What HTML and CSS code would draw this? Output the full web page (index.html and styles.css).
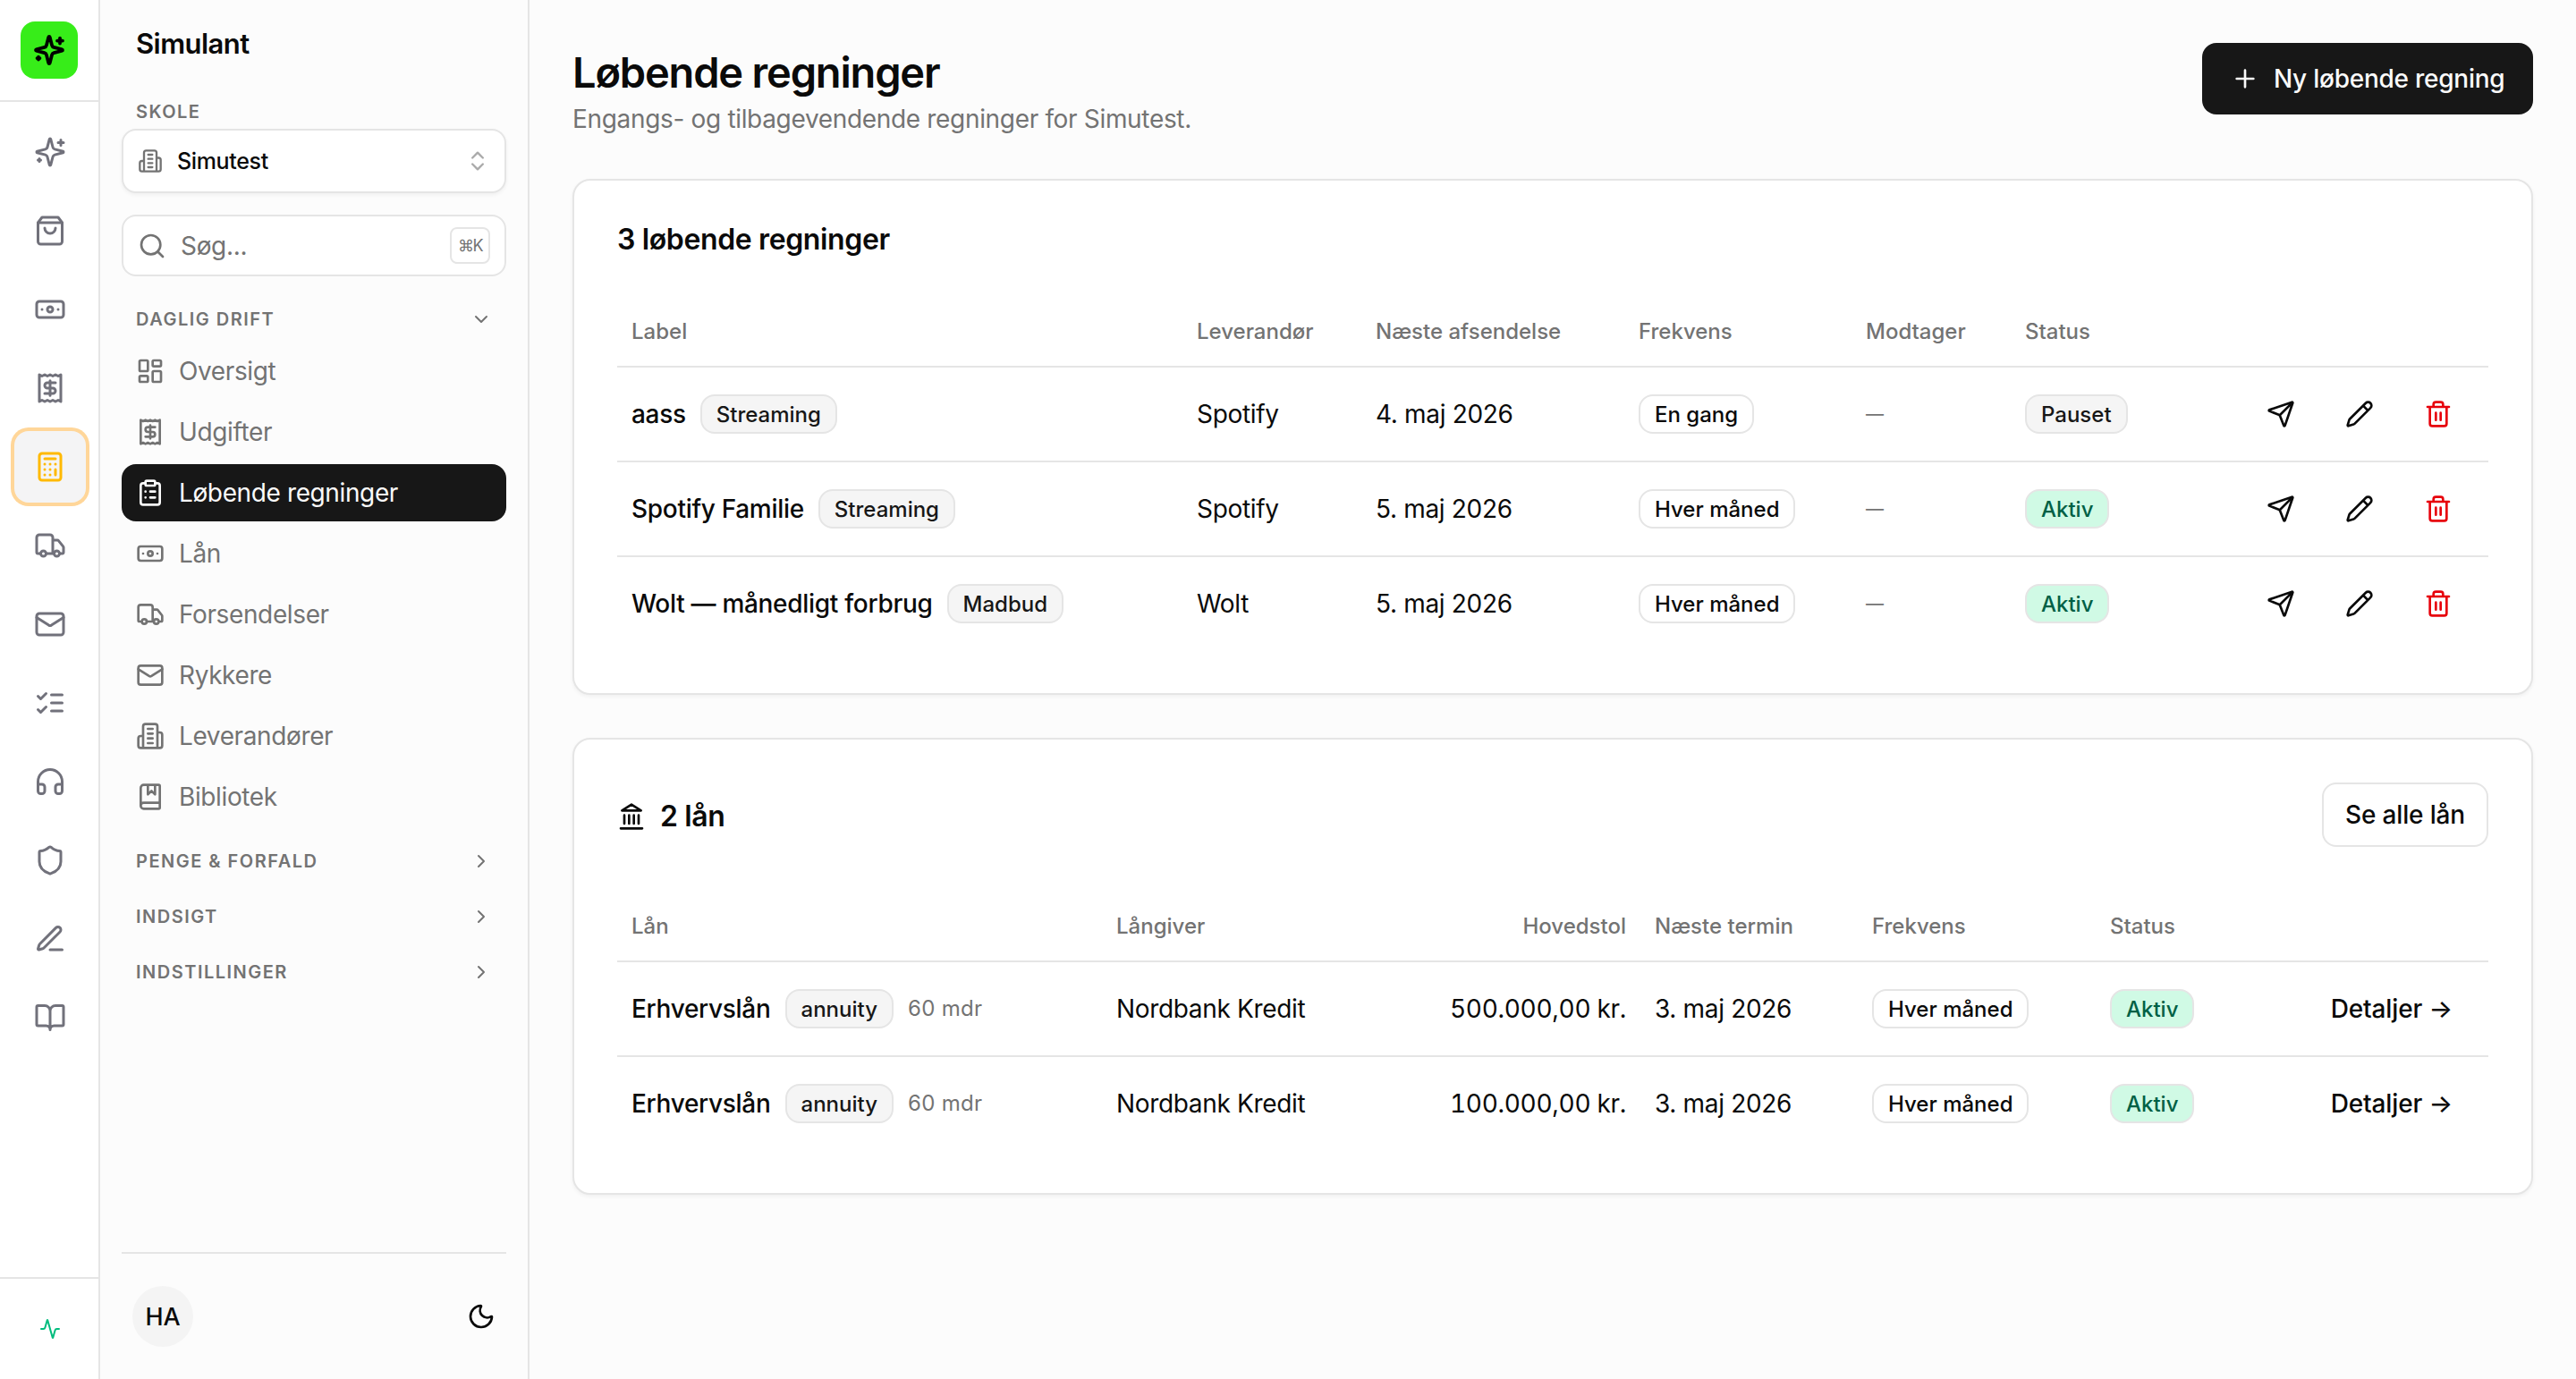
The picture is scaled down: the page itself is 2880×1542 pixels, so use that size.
FILE: index.html
```
<!DOCTYPE html>
<html lang="da">
<head>
    <meta charset="UTF-8">
    <meta name="viewport" content="width=device-width, initial-scale=1.0">
    <title>Løbende regninger</title>
    <link rel="stylesheet" href="styles.css">
</head>
<body>
    <!-- Icon sprite -->
    <svg class="sprite" xmlns="http://www.w3.org/2000/svg">
        <symbol id="sparkles" viewBox="0 0 24 24"><path d="M9.937 15.5A2 2 0 0 0 8.5 14.063l-6.135-1.582a.5.5 0 0 1 0-.962L8.5 9.936A2 2 0 0 0 9.937 8.5l1.582-6.135a.5.5 0 0 1 .963 0L14.063 8.5A2 2 0 0 0 15.5 9.937l6.135 1.581a.5.5 0 0 1 0 .964L15.5 14.063a2 2 0 0 0-1.437 1.437l-1.582 6.135a.5.5 0 0 1-.963 0z"/><path d="M20 3v4M22 5h-4M4 17v2M5 18H3"/></symbol>
        <symbol id="bag" viewBox="0 0 24 24"><path d="M6 2 3 6v14a2 2 0 0 0 2 2h14a2 2 0 0 0 2-2V6l-3-4Z"/><path d="M3 6h18M16 10a4 4 0 0 1-8 0"/></symbol>
        <symbol id="banknote" viewBox="0 0 24 24"><rect x="2" y="6" width="20" height="12" rx="2"/><circle cx="12" cy="12" r="2"/><path d="M6 12h.01M18 12h.01"/></symbol>
        <symbol id="receipt" viewBox="0 0 24 24"><path d="M4 2v20l2-1 2 1 2-1 2 1 2-1 2 1 2-1 2 1V2l-2 1-2-1-2 1-2-1-2 1-2-1-2 1Z"/><path d="M16 8h-6a2 2 0 1 0 0 4h4a2 2 0 1 1 0 4H8M12 17.5v-11"/></symbol>
        <symbol id="calculator" viewBox="0 0 24 24"><rect x="4" y="2" width="16" height="20" rx="2"/><path d="M8 6h8M16 14v4M16 10h.01M12 10h.01M8 10h.01M12 14h.01M8 14h.01M12 18h.01M8 18h.01"/></symbol>
        <symbol id="truck" viewBox="0 0 24 24"><path d="M14 18V6a2 2 0 0 0-2-2H4a2 2 0 0 0-2 2v11a1 1 0 0 0 1 1h2M15 18H9M19 18h2a1 1 0 0 0 1-1v-3.65a1 1 0 0 0-.22-.624l-3.48-4.35A1 1 0 0 0 17.52 8H14"/><circle cx="17" cy="18" r="2"/><circle cx="7" cy="18" r="2"/></symbol>
        <symbol id="mail" viewBox="0 0 24 24"><rect x="2" y="4" width="20" height="16" rx="2"/><path d="m22 7-8.991 5.727a2 2 0 0 1-2.009 0L2 7"/></symbol>
        <symbol id="list-checks" viewBox="0 0 24 24"><path d="m3 17 2 2 4-4M3 7l2 2 4-4M13 6h8M13 12h8M13 18h8"/></symbol>
        <symbol id="headphones" viewBox="0 0 24 24"><path d="M3 14h3a2 2 0 0 1 2 2v3a2 2 0 0 1-2 2H5a2 2 0 0 1-2-2v-7a9 9 0 0 1 18 0v7a2 2 0 0 1-2 2h-1a2 2 0 0 1-2-2v-3a2 2 0 0 1 2-2h3"/></symbol>
        <symbol id="shield" viewBox="0 0 24 24"><path d="M20 13c0 5-3.5 7.5-7.66 8.95a1 1 0 0 1-.67-.01C7.5 20.5 4 18 4 13V6a1 1 0 0 1 1-1c2 0 4.5-1.2 6.24-2.72a1.17 1.17 0 0 1 1.52 0C14.51 3.81 17 5 19 5a1 1 0 0 1 1 1z"/></symbol>
        <symbol id="pen-line" viewBox="0 0 24 24"><path d="M12 20h9M16.376 3.622a1 1 0 0 1 3.002 3.002L7.368 18.635a2 2 0 0 1-.855.506l-2.872.838a.5.5 0 0 1-.62-.62l.838-2.872a2 2 0 0 1 .506-.854z"/></symbol>
        <symbol id="book-open" viewBox="0 0 24 24"><path d="M12 7v14M3 18a1 1 0 0 1-1-1V4a1 1 0 0 1 1-1h5a4 4 0 0 1 4 4 4 4 0 0 1 4-4h5a1 1 0 0 1 1 1v13a1 1 0 0 1-1 1h-6a3 3 0 0 0-3 3 3 3 0 0 0-3-3z"/></symbol>
        <symbol id="activity" viewBox="0 0 24 24"><path d="M22 12h-2.48a2 2 0 0 0-1.93 1.46l-2.35 8.36a.25.25 0 0 1-.48 0L9.24 2.18a.25.25 0 0 0-.48 0l-2.35 8.36A2 2 0 0 1 4.49 12H2"/></symbol>
        <symbol id="building" viewBox="0 0 24 24"><path d="M6 22V4a2 2 0 0 1 2-2h8a2 2 0 0 1 2 2v18ZM6 12H4a2 2 0 0 0-2 2v6a2 2 0 0 0 2 2h2M18 9h2a2 2 0 0 1 2 2v9a2 2 0 0 1-2 2h-2M10 6h4M10 10h4M10 14h4M10 18h4"/></symbol>
        <symbol id="chevrons" viewBox="0 0 24 24"><path d="m7 15 5 5 5-5M7 9l5-5 5 5"/></symbol>
        <symbol id="chevron-down" viewBox="0 0 24 24"><path d="m6 9 6 6 6-6"/></symbol>
        <symbol id="chevron-right" viewBox="0 0 24 24"><path d="m9 18 6-6-6-6"/></symbol>
        <symbol id="search" viewBox="0 0 24 24"><path d="m21 21-4.34-4.34"/><circle cx="11" cy="11" r="8"/></symbol>
        <symbol id="dashboard" viewBox="0 0 24 24"><rect x="3" y="3" width="7" height="9" rx="1"/><rect x="14" y="3" width="7" height="5" rx="1"/><rect x="14" y="12" width="7" height="9" rx="1"/><rect x="3" y="16" width="7" height="5" rx="1"/></symbol>
        <symbol id="clipboard" viewBox="0 0 24 24"><rect x="8" y="2" width="8" height="4" rx="1"/><path d="M16 4h2a2 2 0 0 1 2 2v14a2 2 0 0 1-2 2H6a2 2 0 0 1-2-2V6a2 2 0 0 1 2-2h2M12 11h4M12 16h4M8 11h.01M8 16h.01"/></symbol>
        <symbol id="book-marked" viewBox="0 0 24 24"><path d="M10 2v8l3-3 3 3V2M4 19.5v-15A2.5 2.5 0 0 1 6.5 2H19a1 1 0 0 1 1 1v18a1 1 0 0 1-1 1H6.5a1 1 0 0 1 0-5H20"/></symbol>
        <symbol id="moon" viewBox="0 0 24 24"><path d="M20.985 12.486a9 9 0 1 1-9.473-9.472c.405-.022.617.46.402.803a6 6 0 0 0 8.268 8.268c.344-.215.825-.004.803.401"/></symbol>
        <symbol id="plus" viewBox="0 0 24 24"><path d="M5 12h14M12 5v14"/></symbol>
        <symbol id="send" viewBox="0 0 24 24"><path d="M14.536 21.686a.5.5 0 0 0 .937-.024l6.5-19a.496.496 0 0 0-.635-.635l-19 6.5a.5.5 0 0 0-.024.937l7.93 3.18a2 2 0 0 1 1.112 1.11zM21.854 2.147l-10.94 10.939"/></symbol>
        <symbol id="pencil" viewBox="0 0 24 24"><path d="M21.174 6.812a1 1 0 0 0-3.986-3.987L3.842 16.174a2 2 0 0 0-.5.83l-1.321 4.352a.5.5 0 0 0 .623.622l4.353-1.32a2 2 0 0 0 .83-.497zM15 5l4 4"/></symbol>
        <symbol id="trash" viewBox="0 0 24 24"><path d="M3 6h18M19 6v14a2 2 0 0 1-2 2H7a2 2 0 0 1-2-2V6M8 6V4a2 2 0 0 1 2-2h4a2 2 0 0 1 2 2v2M10 11v6M14 11v6"/></symbol>
        <symbol id="landmark" viewBox="0 0 24 24"><path d="M3 22h18M6 18v-7M10 18v-7M14 18v-7M18 18v-7M12 2l8 5H4z"/></symbol>
    </svg>

    <div class="app">
        <!-- Module rail -->
        <nav class="rail">
            <div class="rail-top">
                <a class="logo" href="#"><svg class="icon"><use href="#sparkles"/></svg></a>
            </div>
            <div class="rail-items">
                <a class="rail-item" href="#"><svg class="icon"><use href="#sparkles"/></svg></a>
                <a class="rail-item" href="#"><svg class="icon"><use href="#bag"/></svg></a>
                <a class="rail-item" href="#"><svg class="icon"><use href="#banknote"/></svg></a>
                <a class="rail-item" href="#"><svg class="icon"><use href="#receipt"/></svg></a>
                <a class="rail-item active" href="#"><svg class="icon"><use href="#calculator"/></svg></a>
                <a class="rail-item" href="#"><svg class="icon"><use href="#truck"/></svg></a>
                <a class="rail-item" href="#"><svg class="icon"><use href="#mail"/></svg></a>
                <a class="rail-item" href="#"><svg class="icon"><use href="#list-checks"/></svg></a>
                <a class="rail-item" href="#"><svg class="icon"><use href="#headphones"/></svg></a>
                <a class="rail-item" href="#"><svg class="icon"><use href="#shield"/></svg></a>
                <a class="rail-item" href="#"><svg class="icon"><use href="#pen-line"/></svg></a>
                <a class="rail-item" href="#"><svg class="icon"><use href="#book-open"/></svg></a>
            </div>
            <div class="rail-bottom"><svg class="icon"><use href="#activity"/></svg></div>
        </nav>

        <!-- Sidebar -->
        <aside class="sidebar">
            <div class="brand">Simulant</div>
            <div class="school-label">SKOLE</div>
            <button class="school-select">
                <svg class="icon icon-sm"><use href="#building"/></svg>
                <span>Simutest</span>
                <svg class="icon icon-sm chevrons"><use href="#chevrons"/></svg>
            </button>
            <div class="search">
                <svg class="icon"><use href="#search"/></svg>
                <span>Søg...</span>
                <kbd>⌘K</kbd>
            </div>

            <div class="group-title first">DAGLIG DRIFT<svg class="icon"><use href="#chevron-down"/></svg></div>
            <div class="menu">
                <a class="menu-item" href="#"><svg class="icon"><use href="#dashboard"/></svg>Oversigt</a>
                <a class="menu-item" href="#"><svg class="icon"><use href="#receipt"/></svg>Udgifter</a>
                <a class="menu-item active" href="#"><svg class="icon"><use href="#clipboard"/></svg>Løbende regninger</a>
                <a class="menu-item" href="#"><svg class="icon"><use href="#banknote"/></svg>Lån</a>
                <a class="menu-item" href="#"><svg class="icon"><use href="#truck"/></svg>Forsendelser</a>
                <a class="menu-item" href="#"><svg class="icon"><use href="#mail"/></svg>Rykkere</a>
                <a class="menu-item" href="#"><svg class="icon"><use href="#building"/></svg>Leverandører</a>
                <a class="menu-item" href="#"><svg class="icon"><use href="#book-marked"/></svg>Bibliotek</a>
            </div>
            <div class="group-title">PENGE &amp; FORFALD<svg class="icon"><use href="#chevron-right"/></svg></div>
            <div class="group-title">INDSIGT<svg class="icon"><use href="#chevron-right"/></svg></div>
            <div class="group-title">INDSTILLINGER<svg class="icon"><use href="#chevron-right"/></svg></div>

            <div class="sidebar-footer">
                <div class="avatar">HA</div>
                <svg class="icon"><use href="#moon"/></svg>
            </div>
        </aside>

        <!-- Content -->
        <main class="content">
            <header class="page-header">
                <div>
                    <h1>Løbende regninger</h1>
                    <p class="subtitle">Engangs- og tilbagevendende regninger for Simutest.</p>
                </div>
                <button class="btn-primary"><svg class="icon"><use href="#plus"/></svg>Ny løbende regning</button>
            </header>

            <section class="card">
                <h2 class="card-title">3 løbende regninger</h2>
                <table class="table bills">
                    <colgroup>
                        <col class="b-label"><col class="b-vendor"><col class="b-next"><col class="b-freq"><col class="b-to"><col class="b-status">
                    </colgroup>
                    <thead>
                        <tr>
                            <th>Label</th>
                            <th>Leverandør</th>
                            <th>Næste afsendelse</th>
                            <th>Frekvens</th>
                            <th>Modtager</th>
                            <th colspan="2">Status</th>
                        </tr>
                    </thead>
                    <tbody>
                        <tr>
                            <td><div class="cell-label">aass<span class="badge muted">Streaming</span></div></td>
                            <td>Spotify</td>
                            <td>4. maj 2026</td>
                            <td><span class="badge">En gang</span></td>
                            <td class="dim">—</td>
                            <td><span class="badge muted">Pauset</span></td>
                            <td><div class="actions">
                                <button><svg class="icon"><use href="#send"/></svg></button>
                                <button><svg class="icon"><use href="#pencil"/></svg></button>
                                <button class="danger"><svg class="icon"><use href="#trash"/></svg></button>
                            </div></td>
                        </tr>
                        <tr>
                            <td><div class="cell-label">Spotify Familie<span class="badge muted">Streaming</span></div></td>
                            <td>Spotify</td>
                            <td>5. maj 2026</td>
                            <td><span class="badge">Hver måned</span></td>
                            <td class="dim">—</td>
                            <td><span class="badge success">Aktiv</span></td>
                            <td><div class="actions">
                                <button><svg class="icon"><use href="#send"/></svg></button>
                                <button><svg class="icon"><use href="#pencil"/></svg></button>
                                <button class="danger"><svg class="icon"><use href="#trash"/></svg></button>
                            </div></td>
                        </tr>
                        <tr>
                            <td><div class="cell-label">Wolt — månedligt forbrug<span class="badge muted">Madbud</span></div></td>
                            <td>Wolt</td>
                            <td>5. maj 2026</td>
                            <td><span class="badge">Hver måned</span></td>
                            <td class="dim">—</td>
                            <td><span class="badge success">Aktiv</span></td>
                            <td><div class="actions">
                                <button><svg class="icon"><use href="#send"/></svg></button>
                                <button><svg class="icon"><use href="#pencil"/></svg></button>
                                <button class="danger"><svg class="icon"><use href="#trash"/></svg></button>
                            </div></td>
                        </tr>
                    </tbody>
                </table>
            </section>

            <section class="card">
                <div class="card-head">
                    <h2 class="card-title"><svg class="icon"><use href="#landmark"/></svg>2 lån</h2>
                    <button class="btn-outline">Se alle lån</button>
                </div>
                <table class="table loans">
                    <colgroup>
                        <col class="l-name"><col class="l-lender"><col class="l-amount"><col class="l-next"><col class="l-freq"><col class="l-status">
                    </colgroup>
                    <thead>
                        <tr>
                            <th>Lån</th>
                            <th>Långiver</th>
                            <th class="right">Hovedstol</th>
                            <th>Næste termin</th>
                            <th>Frekvens</th>
                            <th colspan="2">Status</th>
                        </tr>
                    </thead>
                    <tbody>
                        <tr>
                            <td><div class="cell-label">Erhvervslån<span class="badge muted">annuity</span><span class="months">60 mdr</span></div></td>
                            <td>Nordbank Kredit</td>
                            <td class="right amount">500.000,00 kr.</td>
                            <td>3. maj 2026</td>
                            <td><span class="badge">Hver måned</span></td>
                            <td><span class="badge success">Aktiv</span></td>
                            <td class="right"><a class="details" href="#">Detaljer →</a></td>
                        </tr>
                        <tr>
                            <td><div class="cell-label">Erhvervslån<span class="badge muted">annuity</span><span class="months">60 mdr</span></div></td>
                            <td>Nordbank Kredit</td>
                            <td class="right amount">100.000,00 kr.</td>
                            <td>3. maj 2026</td>
                            <td><span class="badge">Hver måned</span></td>
                            <td><span class="badge success">Aktiv</span></td>
                            <td class="right"><a class="details" href="#">Detaljer →</a></td>
                        </tr>
                    </tbody>
                </table>
            </section>
        </main>
    </div>
</body>
</html>
```
FILE: styles.css
```
* {
    box-sizing: border-box;
}

body {
    margin: 0;
    font-family: Inter, "Liberation Sans", sans-serif;
    font-size: 28px;
    line-height: 40px;
    letter-spacing: -0.33px;
    color: #0a0a0a;
    background-color: #fcfcfc;
}

a {
    color: inherit;
    text-decoration: none;
}

button {
    font: inherit;
    letter-spacing: inherit;
    color: inherit;
    border: none;
    background: none;
    padding: 0;
    cursor: pointer;
}

.sprite {
    display: none;
}

.icon {
    width: 32px;
    height: 32px;
    flex-shrink: 0;
    fill: none;
    stroke: currentColor;
    stroke-width: 2;
    stroke-linecap: round;
    stroke-linejoin: round;
}

.icon-sm {
    width: 28px;
    height: 28px;
}

.app {
    display: flex;
    height: 100vh;
}

/* Module rail */
.rail {
    display: flex;
    flex-direction: column;
    width: 112px;
    flex-shrink: 0;
    border-right: 2px solid #e5e5e5;
    background-color: #fff;
    color: #71717b;
}

.rail .icon {
    width: 36px;
    height: 36px;
}

.rail-top {
    display: flex;
    justify-content: center;
    align-items: center;
    height: 114px;
    border-bottom: 2px solid #e5e5e5;
}

.logo {
    display: flex;
    justify-content: center;
    align-items: center;
    width: 64px;
    height: 64px;
    border-radius: 16px;
    background-color: #37ed19;
    color: #000;
}

.logo .icon {
    stroke-width: 2.5;
}

.rail-items {
    display: flex;
    flex-direction: column;
    align-items: center;
    gap: 8px;
    flex: 1;
    padding: 16px 0 0 2px;
}

.rail-item {
    display: flex;
    justify-content: center;
    align-items: center;
    width: 80px;
    height: 80px;
    border-radius: 16px;
}

.rail-item.active {
    background-color: #f4f4f5;
    box-shadow: 0 0 0 4px #ffd699;
    color: #ffb900;
}

.rail-bottom {
    display: flex;
    justify-content: center;
    height: 114px;
    padding: 44px 0 0 2px;
    border-top: 2px solid #e5e5e5;
    color: #00bc7d;
}

.rail-bottom .icon {
    width: 24px;
    height: 24px;
}

/* Sidebar */
.sidebar {
    display: flex;
    flex-direction: column;
    width: 480px;
    flex-shrink: 0;
    padding: 24px 24px 0;
    border-right: 2px solid #e5e5e5;
    color: #737373;
}

.brand {
    padding-left: 16px;
    font-size: 31px;
    font-weight: 600;
    line-height: 49px;
    letter-spacing: -0.54px;
    color: #0a0a0a;
}

.school-label {
    margin: 39px 0 5px;
    padding-left: 16px;
    font-size: 20px;
    font-weight: 600;
    line-height: 27px;
    letter-spacing: 1.45px;
}

.school-select {
    display: flex;
    align-items: center;
    gap: 16px;
    height: 72px;
    padding: 0 16px;
    border: 2px solid #e5e5e5;
    border-radius: 16px;
    background-color: #fff;
    box-shadow: 0 2px 4px rgba(0, 0, 0, 0.05);
}

.school-select span {
    flex: 1;
    text-align: left;
    font-size: 25px;
    font-weight: 500;
    letter-spacing: -0.35px;
    color: #0a0a0a;
}

.chevrons {
    opacity: 0.6;
}

.search {
    display: flex;
    align-items: center;
    gap: 16px;
    height: 69px;
    margin-top: 24px;
    padding: 0 16px;
    border: 2px solid #e5e5e5;
    border-radius: 16px;
    background-color: #fff;
}

.search span {
    flex: 1;
}

kbd {
    display: flex;
    justify-content: center;
    align-items: center;
    width: 45px;
    height: 41px;
    border: 2px solid #e5e5e5;
    border-radius: 8px;
    font-family: Inter, "DejaVu Sans", sans-serif;
    font-size: 18px;
    letter-spacing: -1.5px;
}

.group-title {
    display: flex;
    justify-content: space-between;
    align-items: center;
    height: 54px;
    margin-bottom: 8px;
    padding: 1px 16px 0;
    font-size: 20px;
    font-weight: 600;
    letter-spacing: 1.5px;
}

.group-title.first {
    margin: 20px 0 0;
}

.group-title .icon {
    width: 24px;
    height: 24px;
}

.menu {
    display: flex;
    flex-direction: column;
    gap: 4px;
    margin-bottom: 12px;
}

.menu-item {
    display: flex;
    align-items: center;
    gap: 16px;
    height: 64px;
    padding: 0 16px;
    border-radius: 16px;
    letter-spacing: -0.38px;
}

.menu-item.active {
    background-color: #171717;
    color: #fafafa;
}

.sidebar-footer {
    display: flex;
    justify-content: space-between;
    align-items: center;
    height: 142px;
    margin-top: auto;
    padding: 0 12px;
    border-top: 2px solid #e5e5e5;
    color: #0a0a0a;
}

.avatar {
    display: flex;
    justify-content: center;
    align-items: center;
    width: 68px;
    height: 68px;
    padding-top: 2px;
    border-radius: 50%;
    background-color: #f4f4f4;
    font-size: 27px;
    font-weight: 500;
    letter-spacing: 0;
}

/* Content */
.content {
    flex: 1;
    padding: 48px;
}

.page-header {
    display: flex;
    justify-content: space-between;
    align-items: flex-start;
    margin-bottom: 48px;
}

h1 {
    margin: 0;
    padding-top: 1px;
    font-size: 47px;
    font-weight: 600;
    line-height: 64px;
    letter-spacing: -1.18px;
}

.subtitle {
    margin: 0 0 -1px;
    color: #737373;
}

.btn-primary {
    display: flex;
    align-items: center;
    gap: 16px;
    width: 370px;
    height: 80px;
    padding: 0 32px;
    border-radius: 16px;
    background-color: #171717;
    color: #fafafa;
    font-weight: 500;
    letter-spacing: -0.25px;
    white-space: nowrap;
}

.card {
    margin-bottom: 48px;
    padding: 48px;
    border: 2px solid #e5e5e5;
    border-radius: 20px;
    background-color: #fff;
    box-shadow: 0 2px 4px rgba(0, 0, 0, 0.05);
}

.card-title {
    display: flex;
    align-items: center;
    gap: 16px;
    margin: 0 0 -2px;
    padding-top: 2px;
    font-size: 32px;
    font-weight: 600;
    line-height: 32px;
    letter-spacing: -0.37px;
}

.card-head {
    display: flex;
    justify-content: space-between;
    align-items: center;
}

.btn-outline {
    width: 186px;
    height: 72px;
    border: 2px solid #e5e5e5;
    border-radius: 16px;
    font-weight: 500;
    letter-spacing: -0.15px;
}

/* Tables */
.table {
    width: 100%;
    margin-top: 48px;
    table-layout: fixed;
    border-collapse: separate;
    border-spacing: 0;
}

.table th {
    height: 81px;
    padding: 2px 16px 0;
    border-bottom: 2px solid #e5e5e5;
    text-align: left;
    font-size: 24px;
    font-weight: 500;
    letter-spacing: 0;
    color: #737373;
}

.table td {
    height: 106px;
    padding: 0 16px;
    border-bottom: 2px solid #e5e5e5;
    white-space: nowrap;
}

.table tbody tr:last-child td {
    height: 104px;
    border-bottom: none;
}

.table .right {
    text-align: right;
}

.table .dim {
    font-size: 20px;
    color: #737373;
}

.table .amount {
    font-variant-numeric: tabular-nums;
    letter-spacing: -0.3px;
}

.b-label { width: 632px; }
.b-vendor { width: 200px; }
.b-next { width: 294px; }
.b-freq { width: 254px; }
.b-to { width: 178px; }
.b-status { width: 200px; }

.l-name { width: 542px; }
.l-lender { width: 320px; }
.l-amount { width: 282px; }
.l-next { width: 243px; }
.l-freq { width: 266px; }
.l-status { width: 200px; }

.cell-label {
    display: flex;
    align-items: center;
    gap: 16px;
    font-weight: 500;
    letter-spacing: -0.3px;
}

.months {
    font-size: 24px;
    font-weight: 400;
    letter-spacing: 0.3px;
    color: #737373;
}

.badge {
    display: inline-flex;
    align-items: center;
    height: 44px;
    padding: 1px 16px 0;
    border: 2px solid #e5e5e5;
    border-radius: 16px;
    font-size: 24px;
    font-weight: 500;
    letter-spacing: 0;
    vertical-align: middle;
}

.badge.muted {
    background-color: #f5f5f5;
    color: #171717;
}

.badge.success {
    background-color: #d0fae5;
    color: #006045;
}

.actions {
    display: flex;
    justify-content: flex-end;
    gap: 8px;
}

.actions button {
    display: flex;
    justify-content: center;
    align-items: center;
    width: 80px;
    height: 80px;
}

.actions .danger {
    color: #e7000b;
}

.details {
    padding-right: 24px;
    font-weight: 500;
    letter-spacing: -0.15px;
}
```
